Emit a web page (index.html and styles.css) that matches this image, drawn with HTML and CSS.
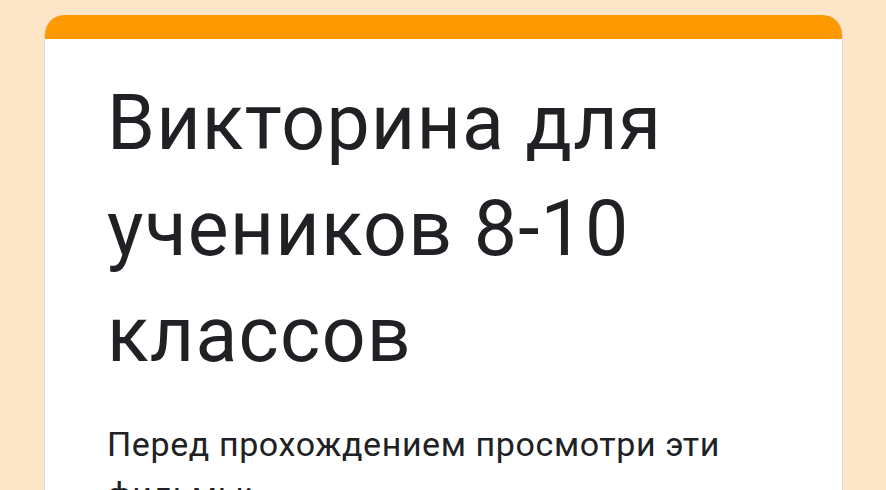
FILE: index.html
```html
<!DOCTYPE html>
<html lang="ru">
<head>
<meta charset="utf-8">
<link rel="stylesheet" href="styles.css">
</head>
<body>
<div class="page">
  <div class="card">
    <div class="card-top"></div>
    <div class="card-body">
      <h1 class="title">Викторина для учеников 8-10 классов</h1>
      <p class="desc">Перед прохождением просмотри эти фильмы:</p>
    </div>
  </div>
</div>
</body>
</html>
```

FILE: styles.css
```css
html, body {
  margin: 0;
  padding: 0;
  background: #fde6c8;
  overflow: hidden;
}
.page {
  width: 886px;
  height: 490px;
  padding: 15px 43px 0 44px;
  box-sizing: border-box;
}
.card {
  background: #ffffff;
  border-radius: 20px 20px 0 0;
  border-left: 1px solid #e3d8cc;
  border-right: 1px solid #e3d8cc;
  overflow: hidden;
  height: 600px;
}
.card-top {
  height: 24px;
  background: #fe9902;
  margin: 0 -1px;
}
.card-body {
  padding: 31px 40px 0 62px;
}
.title {
  margin: 0;
  font-family: Roboto, "Noto Sans", sans-serif;
  font-weight: 400;
  font-size: 77px;
  line-height: 106px;
  color: #202124;
  letter-spacing: 1.2px;
}
.desc {
  margin: 31px 0 0;
  font-family: Roboto, "Noto Sans", sans-serif;
  font-size: 34px;
  line-height: 50px;
  color: #202124;
  letter-spacing: 0.6px;
}
```
